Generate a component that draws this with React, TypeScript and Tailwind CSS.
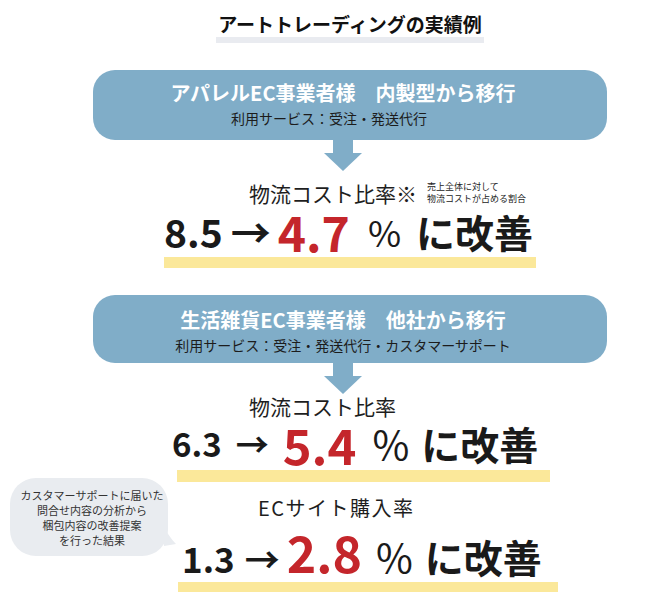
const RED = 'text-[#c4262b]';

function DownArrow() {
  return (
    <svg width="38" height="31" viewBox="0 0 38 31" className="block">
      <rect x="9" y="0" width="20" height="14" fill="#80adc8" />
      <polygon points="0,13 38,13 19,31" fill="#80adc8" />
    </svg>
  );
}

function CaseBox({
  title,
  service,
  className,
  titleClass,
  serviceClass,
}: {
  title: string;
  service: string;
  className: string;
  titleClass: string;
  serviceClass: string;
}) {
  return (
    <div className={`ml-[93px] w-[514px] rounded-[22px] bg-[#80adc8] flex flex-col items-center pr-[14px] ${className}`}>
      <p className={`text-white font-bold leading-[26px] ${titleClass}`}>{title}</p>
      <p className={`mt-[3px] text-[14px] leading-[18px] text-[#1c1c1c] ${serviceClass}`}>{service}</p>
    </div>
  );
}

function YellowBar({ className }: { className: string }) {
  return <div className={`bg-[#fbe89a] ${className}`} />;
}

export default function App() {
  return (
    <div className="w-[650px] h-[600px] bg-white overflow-hidden font-['Noto_Sans_CJK_JP','Noto_Sans',sans-serif] text-[#1a1a1a]">
      <div className="flex flex-col">
        {/* heading */}
        <div className="ml-[216px] w-[268px] pt-[12px] flex flex-col items-center">
          <h1 className="text-[19px] font-bold leading-[24px] text-[#111]">アートトレーディングの実績例</h1>
          <div className="mt-[1px] w-full h-[6px] bg-[#e9ebf0]" />
        </div>

        {/* case 1 */}
        <CaseBox
          className="mt-[27px] h-[70px] pt-[10px]"
          titleClass="text-[20px]"
          serviceClass="pr-[28px]"
          title="アパレルEC事業者様　内製型から移行"
          service="利用サービス：受注・発送代行"
        />
        <div className="ml-[324px]">
          <DownArrow />
        </div>

        <div className="mt-[8px] ml-[249px] flex items-center">
          <span className="text-[21px] leading-[28px] text-[#1e1e1e]">物流コスト比率※</span>
          <span className="ml-[10px] text-[9px] leading-[12px] text-[#222]">
            売上全体に対して
            <br />
            物流コストが占める割合
          </span>
        </div>

        <div className="ml-[164px] h-[48px] flex items-center">
          <span className="text-[39px] font-bold leading-none">8.5</span>
          <span className="ml-[8px] text-[40px] font-bold leading-none">→</span>
          <span className={`ml-[7px] text-[48px] font-bold leading-none ${RED}`}>4.7</span>
          <span className="ml-[18px] text-[36px] leading-none">%</span>
          <span className="ml-[15px] text-[39px] font-bold leading-none">に改善</span>
        </div>
        <YellowBar className="mt-[2px] ml-[164px] w-[372px] h-[11px]" />

        {/* case 2 */}
        <CaseBox
          className="mt-[27px] h-[68px] pt-[12px]"
          titleClass="text-[20px]"
          serviceClass=""
          title="生活雑貨EC事業者様　他社から移行"
          service="利用サービス：受注・発送代行・カスタマーサポート"
        />
        <div className="ml-[324px]">
          <DownArrow />
        </div>

        <p className="ml-[249px] text-[21px] leading-[24px] text-[#1e1e1e]">物流コスト比率</p>

        <div className="mt-[1px] ml-[172px] h-[48px] flex items-center">
          <span className="text-[33px] font-bold leading-none">6.3</span>
          <span className="ml-[14px] text-[33px] font-bold leading-none">→</span>
          <span className={`ml-[14px] text-[49px] font-bold leading-none ${RED}`}>5.4</span>
          <span className="ml-[16px] text-[40px] leading-none">%</span>
          <span className="ml-[12px] text-[39px] font-bold leading-none">に改善</span>
        </div>
        <YellowBar className="mt-[3px] ml-[177px] w-[373px] h-[12px]" />

        {/* case 2, second metric with note */}
        <div className="-mt-[4px] flex">
          <div className="w-[178px] pl-[10px]">
            <div className="relative w-[158px] h-[78px] rounded-[26px] bg-[#e9ecf0] pt-[10px] pl-[6px] text-center text-[11px] leading-[15px] text-[#333]">
              カスタマーサポートに届いた
              <br />
              問合せ内容の分析から
              <br />
              梱包内容の改善提案
              <br />
              を行った結果
              <svg width="14" height="20" viewBox="0 0 14 20" className="absolute right-[-10px] top-[50px]">
                <path d="M0,0 C4,6 8,12 12,16 L0,18 Z" fill="#e9ecf0" />
              </svg>
            </div>
          </div>
          <div className="flex flex-col pt-[18px]">
            <p className="ml-[80px] text-[20px] leading-[24px] tracking-[1.5px] text-[#1e1e1e]">ECサイト購入率</p>
            <div className="mt-[6px] ml-[4px] flex items-baseline">
              <span className="text-[35px] font-bold leading-none">1.3</span>
              <span className="ml-[10px] text-[35px] font-bold leading-none">→</span>
              <span className={`ml-[7px] text-[50px] font-bold leading-none ${RED}`}>2.8</span>
              <span className="ml-[14px] text-[40px] leading-none">%</span>
              <span className="ml-[12px] text-[39px] font-bold leading-none">に改善</span>
            </div>
            <YellowBar className="mt-[6px] w-[380px] h-[10px]" />
          </div>
        </div>
      </div>
    </div>
  );
}
